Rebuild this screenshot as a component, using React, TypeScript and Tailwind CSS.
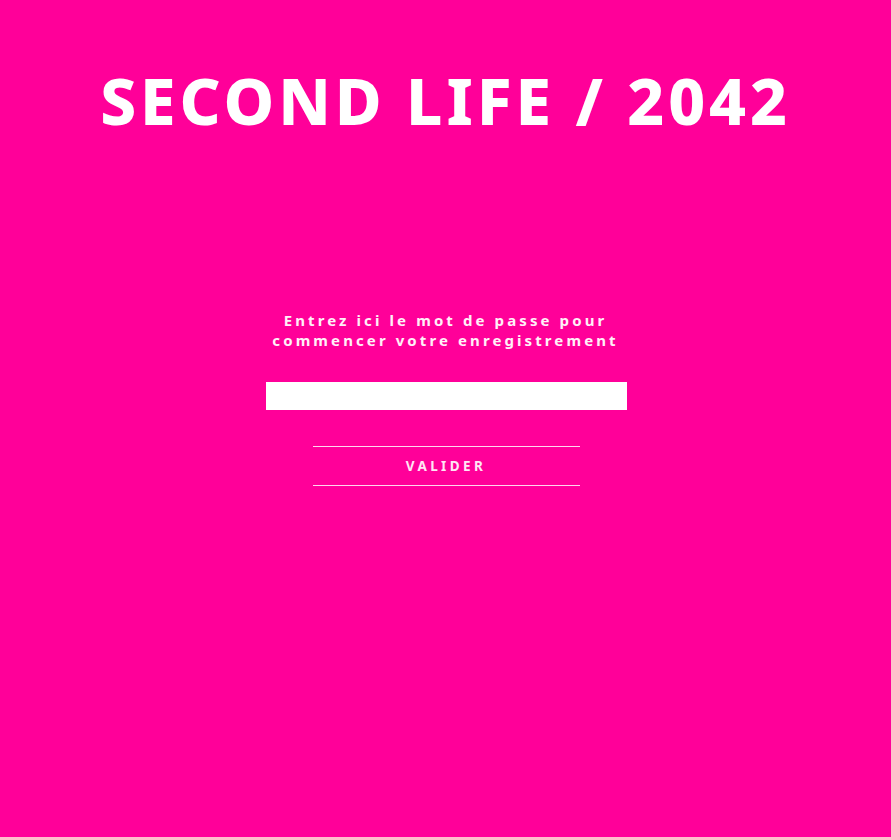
export default function App() {
  return (
    <div className="min-h-[837px] w-full bg-[#ff0099] flex flex-col items-center" style={{ fontFamily: '"Noto Sans", "Open Sans", sans-serif' }}>
      <h1 className="mt-[61px] text-white font-extrabold text-[64px] leading-[80px] tracking-[3.9px] whitespace-nowrap">SECOND LIFE / 2042</h1>
      <p className="mt-[169px] text-[#fff0f8] font-bold text-[15px] leading-[20px] tracking-[3.1px] text-center w-[380px]">
        Entrez ici le mot de passe pour<br />commencer votre enregistrement
      </p>
      <input type="text" className="mt-[32px] ml-[1px] w-[361px] h-[28px] bg-white outline-none border-0" />
      <button className="mt-[36px] ml-[1px] w-[267px] h-[40px] border-y border-[#ffd6ee] text-[#ffe6f5] font-bold text-[13.5px] tracking-[3.4px]">
        VALIDER
      </button>
    </div>
  );
}
